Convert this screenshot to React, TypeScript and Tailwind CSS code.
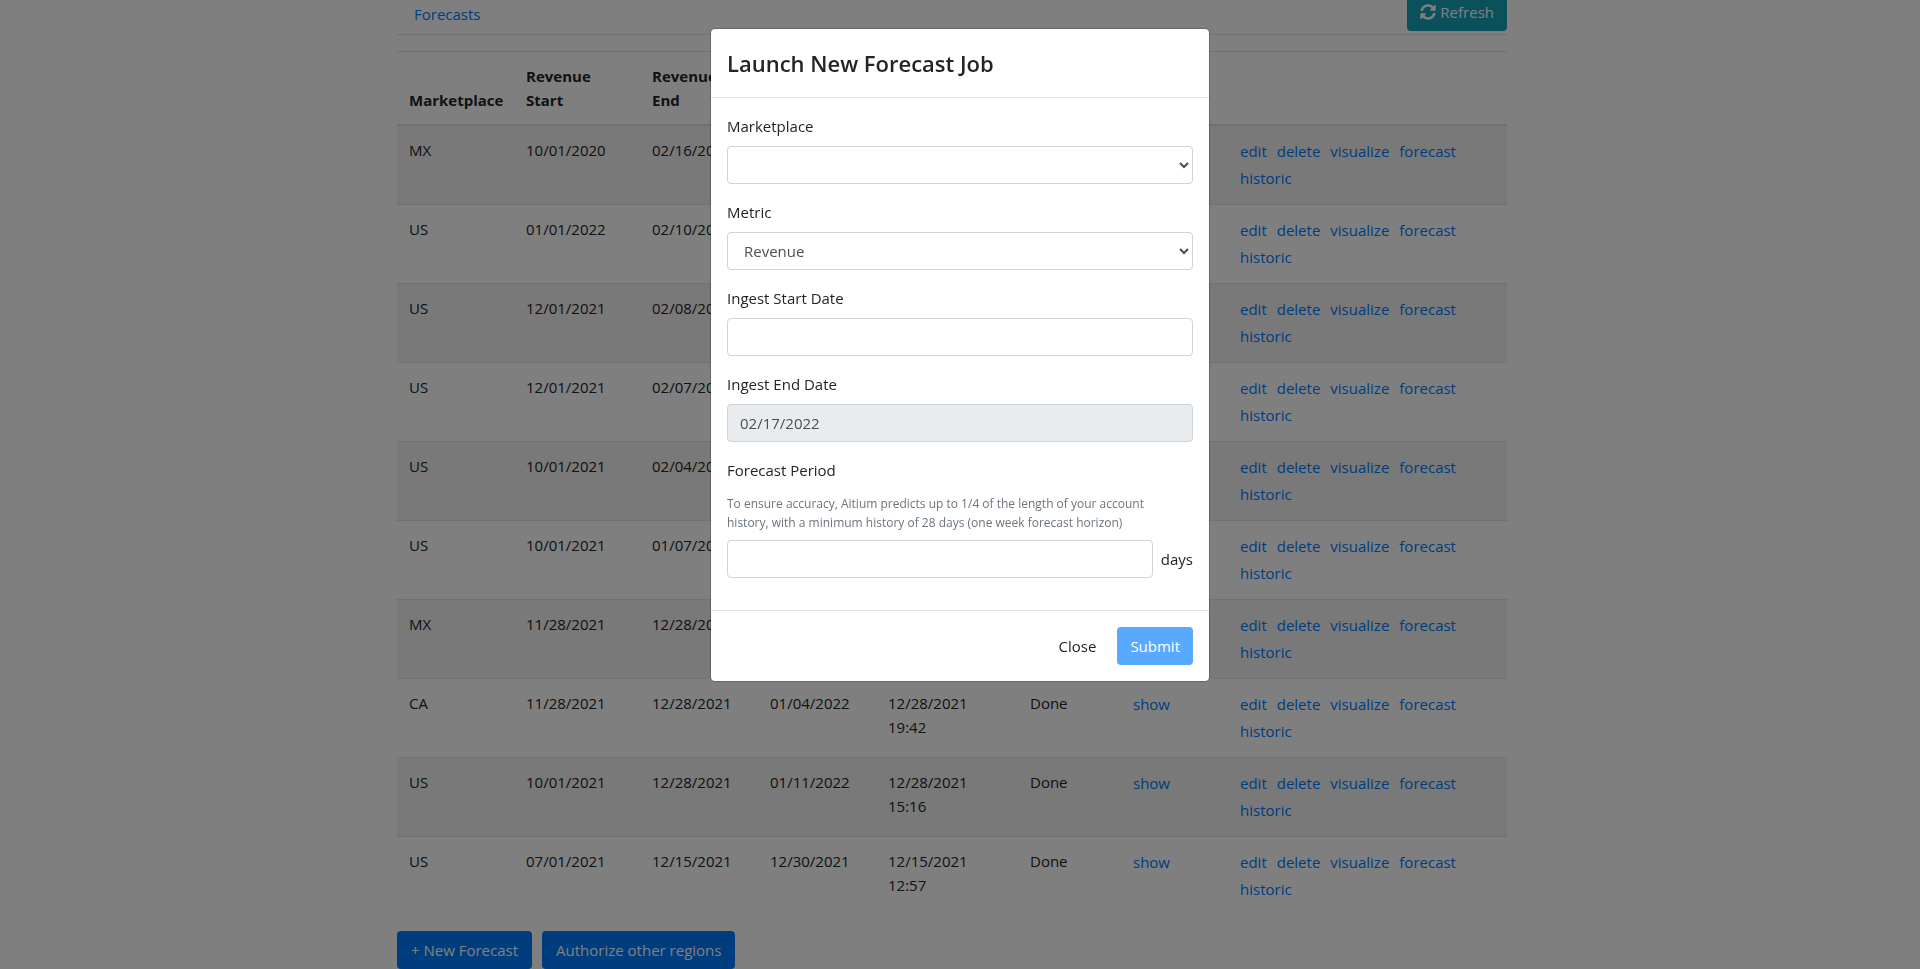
import { useState, type ReactNode } from 'react'
import { FaSyncAlt } from 'react-icons/fa'

interface Forecast {
  marketplace: string
  start: string
  end: string
  forecastEnd?: string
  created?: string
  status?: string
}

const forecasts: Forecast[] = [
  { marketplace: 'MX', start: '10/01/2020', end: '02/16/2022' },
  { marketplace: 'US', start: '01/01/2022', end: '02/10/2022' },
  { marketplace: 'US', start: '12/01/2021', end: '02/08/2022' },
  { marketplace: 'US', start: '12/01/2021', end: '02/07/2022' },
  { marketplace: 'US', start: '10/01/2021', end: '02/04/2022' },
  { marketplace: 'US', start: '10/01/2021', end: '01/07/2022' },
  { marketplace: 'MX', start: '11/28/2021', end: '12/28/2021' },
  {
    marketplace: 'CA',
    start: '11/28/2021',
    end: '12/28/2021',
    forecastEnd: '01/04/2022',
    created: '12/28/2021 19:42',
    status: 'Done',
  },
  {
    marketplace: 'US',
    start: '10/01/2021',
    end: '12/28/2021',
    forecastEnd: '01/11/2022',
    created: '12/28/2021 15:16',
    status: 'Done',
  },
  {
    marketplace: 'US',
    start: '07/01/2021',
    end: '12/15/2021',
    forecastEnd: '12/30/2021',
    created: '12/15/2021 12:57',
    status: 'Done',
  },
]

const actions = ['edit', 'delete', 'visualize', 'forecast', 'historic']

const control =
  'block w-full h-[38px] rounded border border-[#ced4da] bg-white px-3 text-[#495057] outline-none'

function Field({ id, label, children }: { id: string; label: string; children: ReactNode }) {
  return (
    <div className="mb-4">
      <label htmlFor={id} className="block mb-2">
        {label}
      </label>
      {children}
    </div>
  )
}

function ForecastTable() {
  return (
    <table className="w-full table-fixed border-separate border-spacing-0 my-4">
      <colgroup>
        <col className="w-[117px]" />
        <col className="w-[126px]" />
        <col className="w-[118px]" />
        <col className="w-[118px]" />
        <col className="w-[142px]" />
        <col className="w-[103px]" />
        <col className="w-[107px]" />
        <col />
      </colgroup>
      <thead>
        <tr className="text-left align-bottom *:border-t *:border-b-2 *:border-[#dee2e6] *:p-3">
          <th>Marketplace</th>
          <th>
            Revenue
            <br />
            Start
          </th>
          <th>
            Revenue
            <br />
            End
          </th>
          <td colSpan={5} />
        </tr>
      </thead>
      <tbody>
        {forecasts.map((f, i) => (
          <tr
            key={i}
            className="align-top odd:bg-black/5 *:p-3 *:border-[#dee2e6] not-first:*:border-t"
          >
            <td>{f.marketplace}</td>
            <td>{f.start}</td>
            <td>{f.end}</td>
            <td>{f.forecastEnd}</td>
            <td>{f.created}</td>
            <td>{f.status}</td>
            <td className="leading-[27px]">
              {f.status && (
                <a href="#show" className="text-[#007bff]">
                  show
                </a>
              )}
            </td>
            <td>
              <div className="flex flex-wrap gap-x-[10px] leading-[27px]">
                {actions.map((action) => (
                  <a key={action} href={`#${action}`} className="text-[#007bff]">
                    {action}
                  </a>
                ))}
              </div>
            </td>
          </tr>
        ))}
      </tbody>
    </table>
  )
}

function LaunchModal({ onClose }: { onClose: () => void }) {
  const [marketplace, setMarketplace] = useState('')
  const [metric, setMetric] = useState('Revenue')
  const [startDate, setStartDate] = useState('')
  const [period, setPeriod] = useState('')

  return (
    <div className="fixed inset-0 bg-black/50 overflow-y-auto">
      <div
        role="dialog"
        aria-labelledby="launch-title"
        className="mx-auto my-7 max-w-[500px] rounded-[5px] border border-black/20 bg-white bg-clip-padding"
      >
        <div className="border-b border-[#dee2e6] p-4">
          <h4 id="launch-title" className="text-[22px] leading-9 font-semibold">
            Launch New Forecast Job
          </h4>
        </div>

        <div className="p-4">
          <Field id="marketplace" label="Marketplace">
            <select
              id="marketplace"
              value={marketplace}
              onChange={(e) => setMarketplace(e.target.value)}
              className={control}
            >
              <option value=""></option>
              <option>CA</option>
              <option>MX</option>
              <option>US</option>
            </select>
          </Field>
          <Field id="metric" label="Metric">
            <select
              id="metric"
              value={metric}
              onChange={(e) => setMetric(e.target.value)}
              className={control}
            >
              <option>Revenue</option>
            </select>
          </Field>
          <Field id="start-date" label="Ingest Start Date">
            <input
              id="start-date"
              type="text"
              value={startDate}
              onChange={(e) => setStartDate(e.target.value)}
              className={control}
            />
          </Field>
          <Field id="end-date" label="Ingest End Date">
            <input
              id="end-date"
              type="text"
              value="02/17/2022"
              disabled
              className="block w-full h-[38px] rounded border border-[#ced4da] bg-[#e9ecef] px-3 text-[#495057]"
            />
          </Field>
          <Field id="period" label="Forecast Period">
            <p className="mt-3 mb-2 text-[12px] leading-[19px] text-[#6c757d]">
              To ensure accuracy, Aitium predicts up to 1/4 of the length of your account
              <br />
              history, with a minimum history of 28 days (one week forecast horizon)
            </p>
            <div className="flex items-center gap-2">
              <input
                id="period"
                type="text"
                value={period}
                onChange={(e) => setPeriod(e.target.value)}
                className={control}
              />
              <span>days</span>
            </div>
          </Field>
        </div>

        <div className="flex justify-end gap-2 border-t border-[#dee2e6] p-4">
          <button type="button" onClick={onClose} className="h-[38px] rounded px-[13px]">
            Close
          </button>
          <button
            type="button"
            disabled={!marketplace || !startDate || !period}
            className="h-[38px] rounded bg-[#007bff] px-[13px] text-white disabled:opacity-65"
          >
            Submit
          </button>
        </div>
      </div>
    </div>
  )
}

export default function App() {
  const [open, setOpen] = useState(true)

  return (
    <div className="pr-4 bg-white font-['Open_Sans','Noto_Sans',sans-serif] text-[15px] leading-6 text-[#212529]">
      <div className="mx-auto max-w-[1140px] px-[15px]">
        <div className="flex items-start justify-between border-b border-[#dee2e6]">
          <nav className="pt-[2px] pb-2 px-[17px]">
            <a href="#forecasts" className="text-[#007bff]">
              Forecasts
            </a>
          </nav>
          <button
            type="button"
            className="flex items-center gap-1 rounded-b bg-[#17a2b8] px-[13px] pb-[7px] text-white"
          >
            <FaSyncAlt size={16} />
            Refresh
          </button>
        </div>

        <ForecastTable />

        <div className="flex gap-[10px]">
          <button
            type="button"
            onClick={() => setOpen(true)}
            className="h-[38px] rounded bg-[#007bff] px-[14px] text-white"
          >
            + New Forecast
          </button>
          <button type="button" className="h-[38px] rounded bg-[#007bff] px-[14px] text-white">
            Authorize other regions
          </button>
        </div>
      </div>

      {open && <LaunchModal onClose={() => setOpen(false)} />}
    </div>
  )
}
